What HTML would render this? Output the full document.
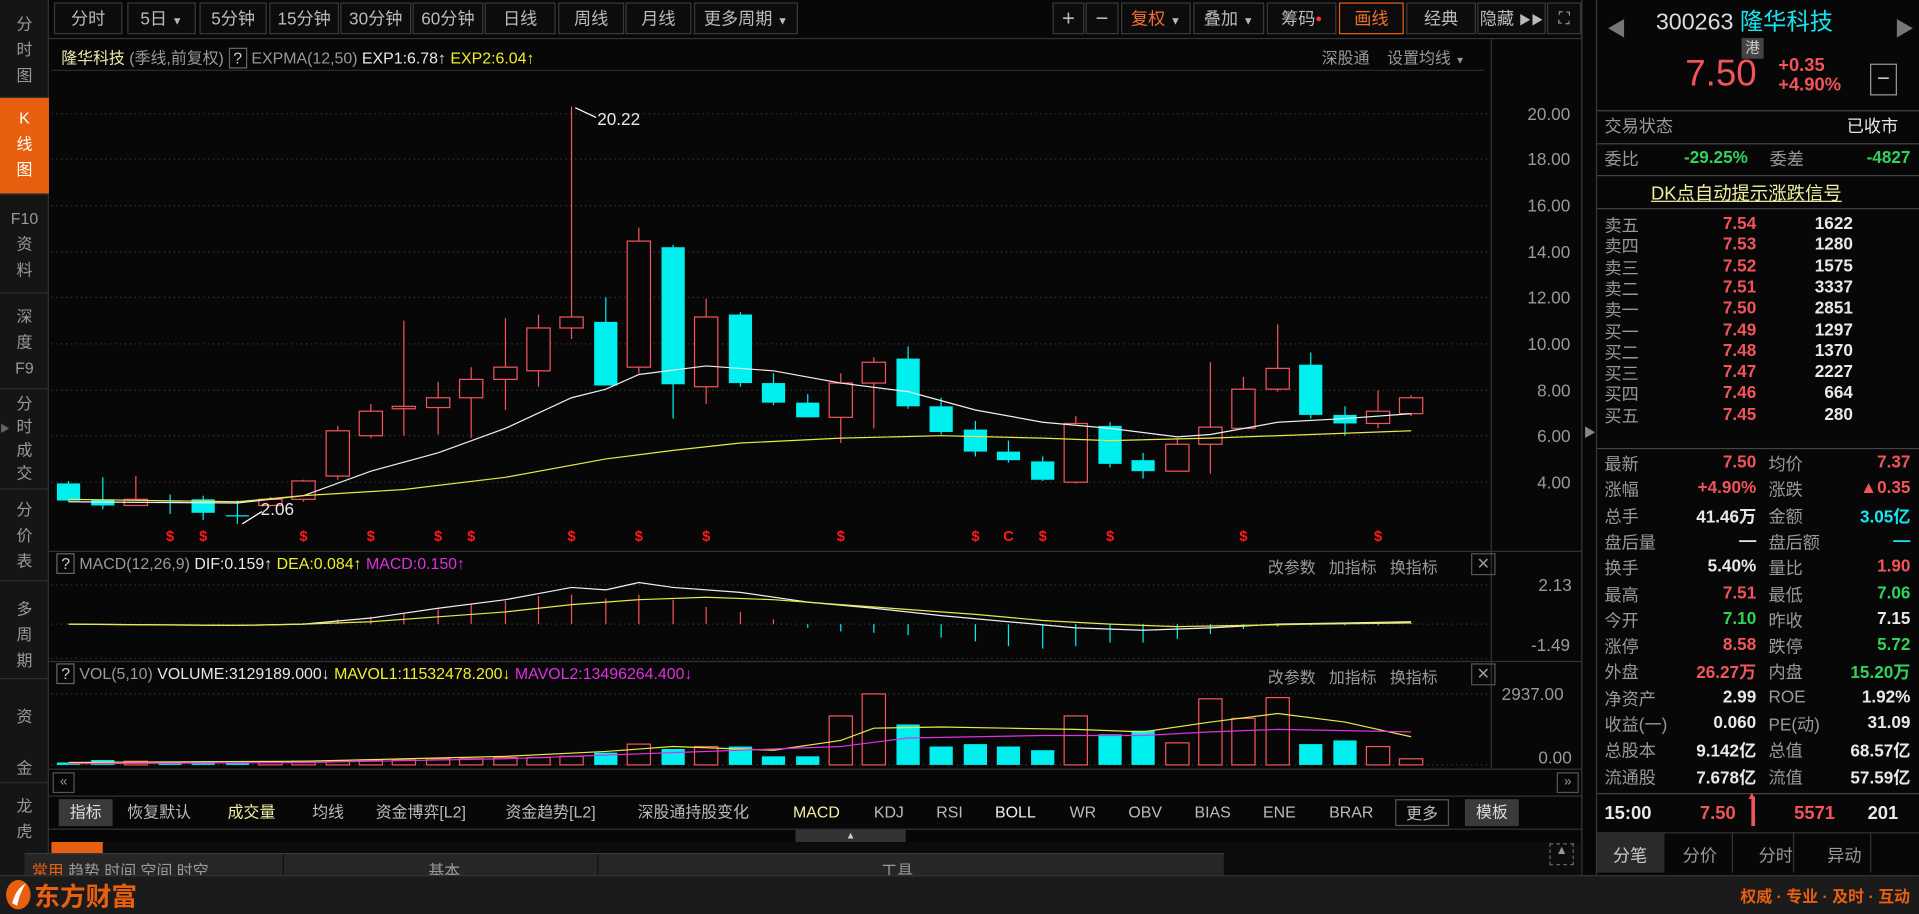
<!DOCTYPE html>
<html><head><meta charset="utf-8">
<style>
*{margin:0;padding:0;box-sizing:border-box}
html,body{width:1919px;height:914px;overflow:hidden;background:#070707}
#w{position:absolute;left:0;top:0;width:1568px;height:747px;transform:scale(1.22385);transform-origin:0 0;background:#070707;font-family:"Liberation Sans","Noto Sans CJK SC",sans-serif;font-size:13px;color:#bbb}
.a{position:absolute;white-space:nowrap}
.side{position:absolute;left:0;top:0;width:40px;height:715px;background:#151515;border-right:1px solid #333}
.si{position:absolute;left:0;width:40px;text-align:center;color:#999;font-size:13px;line-height:21px;border-bottom:1px solid #2c2c2c;overflow:hidden}
.tb{position:absolute;top:2px;height:26px;border:1px solid #3a3a3a;color:#bbb;text-align:center;line-height:24px;font-size:14px;background:#0c0c0c}
.r{color:#f2545b}.g{color:#2fd35a}.c{color:#15e6f0}.y{color:#f0f02a}.m{color:#e030e0}.w{color:#e8e8e8}.gr{color:#999}
.hl{position:absolute;height:1px;background:#333}
.vl{position:absolute;width:1px;background:#333}
.rp{font-size:14px}
.lab{position:absolute;left:1311px;color:#999;font-size:14px}
.v1{position:absolute;right:133px;font-size:14px;font-weight:bold;text-align:right}
.l2{position:absolute;left:1445px;color:#999;font-size:14px}
.v2{position:absolute;right:7px;font-size:14px;font-weight:bold;text-align:right}
.it{position:absolute;top:653px;height:22px;line-height:22px;font-size:13px;color:#bbb}
</style></head><body><div id="w">

<!-- sidebar -->
<div class="side">
<div class="si" style="top:4px;height:76px;padding-top:5px">分<br>时<br>图</div>
<div class="si" style="top:80px;height:79px;padding-top:6px;background:#e8600f;color:#fff">K<br>线<br>图</div>
<div class="si" style="top:160px;height:80px;padding-top:8px">F10<br>资<br>料</div>
<div class="si" style="top:240px;height:78px;padding-top:8px">深<br>度<br>F9</div>
<div class="si" style="top:318px;height:82px;padding-top:2px;line-height:19px">分<br>时<br>成<br>交</div>
<div class="si" style="top:400px;height:75px;padding-top:6px">分<br>价<br>表</div>
<div class="si" style="top:475px;height:80px;padding-top:12px">多<br>周<br>期</div>
<div class="si" style="top:555px;height:85px;padding-top:20px">资<br><br>金</div>
<div class="si" style="top:640px;height:75px;padding-top:8px;border:0">龙<br>虎</div>
</div>
<div class="a" style="left:0px;top:345px;color:#666;font-size:8px">▶</div>

<!-- toolbar -->
<div class="tb" style="left:44px;width:56px">分时</div>
<div class="tb" style="left:104px;width:56px">5日 <span style="font-size:9px">▼</span></div>
<div class="tb" style="left:163px;width:55px">5分钟</div>
<div class="tb" style="left:220px;width:57px">15分钟</div>
<div class="tb" style="left:278px;width:58px">30分钟</div>
<div class="tb" style="left:337px;width:58px">60分钟</div>
<div class="tb" style="left:396px;width:58px">日线</div>
<div class="tb" style="left:456px;width:54px">周线</div>
<div class="tb" style="left:511px;width:54px">月线</div>
<div class="tb" style="left:567px;width:85px">更多周期 <span style="font-size:9px">▼</span></div>
<div class="tb" style="left:860px;width:26px;font-size:18px">+</div>
<div class="tb" style="left:887px;width:27px;font-size:18px">−</div>
<div class="tb" style="left:916px;width:57px;color:#f07030">复权 <span style="font-size:9px;color:#bbb">▼</span></div>
<div class="tb" style="left:975px;width:58px">叠加 <span style="font-size:9px">▼</span></div>
<div class="tb" style="left:1035px;width:57px">筹码<span style="color:#f33;font-size:9px;vertical-align:top">●</span></div>
<div class="tb" style="left:1094px;width:53px;color:#f07030;border-color:#e8600f">画线</div>
<div class="tb" style="left:1149px;width:57px">经典</div>
<div class="tb" style="left:1207px;width:56px">隐藏 <span style="font-size:10px">▶▶</span></div>
<div class="tb" style="left:1264px;width:28px;font-size:13px">⛶</div>

<!-- frames -->
<div class="hl" style="left:40px;top:31px;width:1253px"></div>
<div class="vl" style="left:1218px;top:31px;height:597px"></div>
<div class="vl" style="left:1292px;top:0;height:715px;background:#3a3a3a"></div>
<div class="vl" style="left:1304px;top:0;height:715px;background:#3a3a3a"></div>
<div class="a" style="left:1294px;top:345px;color:#888;font-size:10px">▶</div>
<div class="hl" style="left:40px;top:450px;width:1253px"></div>
<div class="hl" style="left:40px;top:540px;width:1253px"></div>
<div class="hl" style="left:40px;top:628px;width:1253px"></div>
<div class="hl" style="left:40px;top:650px;width:1253px"></div>
<div class="hl" style="left:40px;top:677px;width:1253px"></div>

<!-- main header -->
<div class="a" style="left:50px;top:37px;font-size:13px"><span style="color:#eaeab0">隆华科技</span> <span class="gr">(季线,前复权)</span> <span style="border:1px solid #666;padding:0 3px;color:#ccc">?</span> <span class="gr">EXPMA(12,50)</span> <span class="w">EXP1:6.78↑</span> <span class="y">EXP2:6.04↑</span></div>
<div class="a gr" style="left:1080px;top:37px">深股通 &nbsp;&nbsp; 设置均线 <span style="font-size:8px">▼</span></div>
<div class="hl" style="left:42px;top:57px;width:1170px;background:#2a2a2a"></div>

<!-- price axis -->
<div class="a gr" style="left:1248px;top:85px;font-size:14px;line-height:16px">20.00</div>
<div class="a gr" style="left:1248px;top:122px;font-size:14px">18.00</div>
<div class="a gr" style="left:1248px;top:160px;font-size:14px">16.00</div>
<div class="a gr" style="left:1248px;top:198px;font-size:14px">14.00</div>
<div class="a gr" style="left:1248px;top:235px;font-size:14px">12.00</div>
<div class="a gr" style="left:1248px;top:273px;font-size:14px">10.00</div>
<div class="a gr" style="left:1256px;top:311px;font-size:14px">8.00</div>
<div class="a gr" style="left:1256px;top:348px;font-size:14px">6.00</div>
<div class="a gr" style="left:1256px;top:386px;font-size:14px">4.00</div>

<svg class="a" style="left:0;top:0" width="1292" height="650" id="sv"></svg>

<div class="a w" style="left:488px;top:89px;font-size:14px">20.22</div>
<div class="a w" style="left:213px;top:408px;font-size:14px">2.06</div>

<!-- MACD header -->
<div class="a" style="left:46px;top:453px;font-size:13px"><span style="border:1px solid #666;padding:0 3px;color:#ccc">?</span> <span class="gr">MACD(12,26,9)</span> <span class="w">DIF:0.159↑</span> <span class="y">DEA:0.084↑</span> <span class="m">MACD:0.150↑</span></div>
<div class="a gr" style="left:1036px;top:453px;font-size:13px">改参数 &nbsp; 加指标 &nbsp; 换指标</div>
<div class="a gr" style="left:1202px;top:452px;width:20px;height:18px;border:1px solid #555;text-align:center;line-height:16px">✕</div>
<div class="a gr" style="left:1257px;top:470px;font-size:14px">2.13</div>
<div class="a gr" style="left:1251px;top:519px;font-size:14px">-1.49</div>

<!-- VOL header -->
<div class="a" style="left:46px;top:543px;font-size:13px"><span style="border:1px solid #666;padding:0 3px;color:#ccc">?</span> <span class="gr">VOL(5,10)</span> <span class="w">VOLUME:3129189.000↓</span> <span class="y">MAVOL1:11532478.200↓</span> <span class="m">MAVOL2:13496264.400↓</span></div>
<div class="a gr" style="left:1036px;top:543px;font-size:13px">改参数 &nbsp; 加指标 &nbsp; 换指标</div>
<div class="a gr" style="left:1202px;top:542px;width:20px;height:18px;border:1px solid #555;text-align:center;line-height:16px">✕</div>
<div class="a gr" style="left:1227px;top:559px;font-size:14px">2937.00</div>
<div class="a gr" style="left:1257px;top:611px;font-size:14px">0.00</div>

<!-- scrollbar -->
<div class="a gr" style="left:43px;top:631px;width:18px;height:17px;border:1px solid #555;text-align:center;font-size:11px;line-height:15px">«</div>
<div class="a gr" style="left:1272px;top:631px;width:18px;height:17px;border:1px solid #555;text-align:center;font-size:11px;line-height:15px">»</div>

<!-- indicator tabs -->
<div class="it" style="left:48px;width:44px;background:#3a3a3a;text-align:center;color:#ddd">指标</div>
<div class="it" style="left:104px">恢复默认</div>
<div class="it y" style="left:186px;color:#f0f0a0">成交量</div>
<div class="it" style="left:255px">均线</div>
<div class="it" style="left:307px">资金博弈[L2]</div>
<div class="it" style="left:413px">资金趋势[L2]</div>
<div class="it" style="left:521px">深股通持股变化</div>
<div class="it" style="left:648px;color:#f0f0a0">MACD</div>
<div class="it" style="left:714px">KDJ</div>
<div class="it" style="left:765px">RSI</div>
<div class="it" style="left:813px;color:#eee">BOLL</div>
<div class="it" style="left:874px">WR</div>
<div class="it" style="left:922px">OBV</div>
<div class="it" style="left:976px">BIAS</div>
<div class="it" style="left:1032px">ENE</div>
<div class="it" style="left:1086px">BRAR</div>
<div class="it" style="left:1140px;width:44px;border:1px solid #555;text-align:center">更多</div>
<div class="it" style="left:1197px;width:44px;background:#3a3a3a;text-align:center;color:#ddd">模板</div>

<!-- bottom tabs (partially covered) -->
<div class="a" style="left:650px;top:678px;width:90px;height:10px;background:#333;text-align:center;color:#ccc;font-size:8px;line-height:10px">▲</div>
<div class="a" style="left:40px;top:688px;width:1252px;height:27px;background:#0c0c0c;overflow:hidden">
<div class="a" style="left:2px;top:0;width:42px;height:27px;background:#e8600f"></div>
</div>
<div class="a" style="left:20px;top:697px;width:980px;height:18px;background:#262626;overflow:hidden;border-top:1px solid #3a3a3a">
<div class="a" style="left:6px;top:3px;color:#e8600f;font-size:13px">常用 <span class="gr">趋势 时间 空间 时空</span></div>
<div class="vl" style="left:211px;top:0;height:18px;background:#111"></div>
<div class="a gr" style="left:330px;top:3px">基本</div>
<div class="vl" style="left:468px;top:0;height:18px;background:#111"></div>
<div class="a gr" style="left:700px;top:3px">工具</div>
</div>
<div class="a gr" style="left:1266px;top:689px;width:20px;height:18px;border:1px dashed #666;font-size:10px;text-align:center">▲</div>

<!-- right panel -->
<div class="a" style="left:1313px;top:10px;color:#777;font-size:16px">◀</div>
<div class="a" style="left:1548px;top:10px;color:#777;font-size:16px">▶</div>
<div class="a" style="left:1353px;top:3px;font-size:19px;color:#ddd">300263 <span class="c">隆华科技</span></div>
<div class="a" style="left:1423px;top:31px;width:18px;height:17px;background:#444;color:#ccc;font-size:12px;text-align:center;line-height:17px">港</div>
<div class="a r" style="left:1377px;top:44px;font-size:30px">7.50</div>
<div class="a r" style="left:1453px;top:46px;font-size:15px;font-weight:bold;line-height:16px">+0.35<br>+4.90%</div>
<div class="a" style="left:1528px;top:52px;width:22px;height:26px;border:1px solid #999;color:#ccc;text-align:center;font-size:18px;line-height:22px">−</div>
<div class="hl" style="left:1305px;top:90px;width:263px;background:#444"></div>
<div class="a gr rp" style="left:1311px;top:93px">交易状态</div>
<div class="a w rp" style="left:1509px;top:93px">已收市</div>
<div class="hl" style="left:1305px;top:117px;width:263px;background:#444"></div>
<div class="a gr rp" style="left:1311px;top:120px">委比</div>
<div class="a g rp" style="left:1376px;top:120px;font-weight:bold">-29.25%</div>
<div class="a gr rp" style="left:1446px;top:120px">委差</div>
<div class="a g rp" style="right:7px;top:120px;font-weight:bold">-4827</div>
<div class="hl" style="left:1305px;top:143px;width:263px;background:#444"></div>
<div class="a" style="left:1349px;top:147px;font-size:15px;color:#f0f0a0;text-decoration:underline">DK点自动提示涨跌信号</div>
<div class="hl" style="left:1305px;top:170px;width:263px;background:#444"></div>

<div id="ob"></div>
<div class="hl" style="left:1305px;top:366px;width:263px;background:#444"></div>
<div id="st"></div>
<div class="hl" style="left:1305px;top:648px;width:263px;background:#444"></div>
<div class="a w" style="left:1311px;top:656px;font-size:15px;font-weight:bold">15:00</div>
<div class="a r" style="left:1389px;top:656px;font-size:15px;font-weight:bold">7.50</div>
<div class="a" style="left:1431px;top:651px;width:3px;height:24px;background:#f2545b"></div>
<div class="a r" style="left:1427px;top:645px;font-size:9px">▲</div>
<div class="a r" style="left:1466px;top:656px;font-size:15px;font-weight:bold">5571</div>
<div class="a w" style="left:1526px;top:656px;font-size:15px;font-weight:bold">201</div>
<div class="hl" style="left:1305px;top:680px;width:263px;background:#333"></div>
<div class="a" style="left:1305px;top:681px;width:55px;height:32px;background:#2a2a2a"></div>
<div class="a" style="left:1318px;top:689px;color:#ccc;font-size:14px">分笔</div>
<div class="a gr" style="left:1375px;top:689px;font-size:14px">分价</div>
<div class="a gr" style="left:1437px;top:689px;font-size:14px">分时</div>
<div class="a gr" style="left:1493px;top:689px;font-size:14px">异动</div>
<div class="vl" style="left:1415px;top:681px;height:32px"></div>
<div class="vl" style="left:1465px;top:681px;height:32px"></div>
<div class="vl" style="left:1528px;top:681px;height:32px"></div>

<!-- footer -->
<div class="a" style="left:0;top:715px;width:1568px;height:32px;background:#1b1b1b;border-top:1px solid #333"></div>
<svg class="a" style="left:4px;top:718px" width="22" height="26"><ellipse cx="11" cy="13" rx="10" ry="12" fill="#e8600f"/><path d="M6 20 Q9 8 17 4 Q12 12 10 22Z" fill="#fff"/></svg>
<div class="a" style="left:28px;top:717px;font-size:21px;font-weight:bold;color:#e8600f">东方财富</div>
<div class="a" style="left:1422px;top:722px;font-size:13px;font-weight:bold;color:#e8600f">权威 · 专业 · 及时 · 互动</div>

</div>
<script>
var NS="http://www.w3.org/2000/svg",sv=document.getElementById('sv');
function el(t,a){var e=document.createElementNS(NS,t);for(var k in a)e.setAttribute(k,a[k]);sv.appendChild(e);return e}
[93,130,168,206,243,281,319,356,394].forEach(function(y){el('line',{x1:42,x2:1218,y1:y,y2:y,stroke:'#3a3a3a','stroke-dasharray':'1 3'})});
[478,510,538].forEach(function(y){el('line',{x1:42,x2:1218,y1:y,y2:y,stroke:'#3a3a3a','stroke-dasharray':'1 3'})});
[567,625].forEach(function(y){el('line',{x1:42,x2:1218,y1:y,y2:y,stroke:'#3a3a3a','stroke-dasharray':'1 3'})});
var C=[[56,0,395,409,393,410],[84,0,408,413,390,416],[111,1,408,413,389,413],[139,0,410,411,404,420],[166,0,408,419,405,425],[194,0,421,422,409,428],[221,1,408,413,406,414],[248,1,393,408,392,410],[276,1,352,389,348,392],[303,1,336,356,330,358],[330,1,332,334,262,356],[358,1,325,333,312,355],[385,1,310,325,300,358],[413,1,300,310,260,335],[440,1,268,303,257,316],[467,1,259,268,87,277],[495,0,263,315,243,315],[522,1,197,300,186,305],[550,0,202,314,200,342],[577,1,259,316,244,330],[605,0,257,313,255,316],[632,0,313,329,305,331],[660,0,329,341,322,341],[687,1,313,341,305,362],[714,1,296,313,292,350],[742,0,293,332,283,334],[769,0,332,353,325,355],[797,0,351,369,344,373],[824,0,369,376,360,378],[852,0,377,392,373,393],[879,1,346,394,340,395],[907,0,348,379,345,382],[934,0,376,385,370,391],[962,1,363,385,358,385],[989,1,349,363,296,387],[1016,1,318,350,308,350],[1044,1,301,318,265,320],[1071,0,298,339,288,342],[1099,0,339,346,332,356],[1126,1,336,346,319,350],[1153,1,325,338,323,340]];
var V=[2,4,3,2,3,2,2,3,3,4,4,5,5,6,6,7,10,17,13,15,15,7,7,40,58,33,15,17,15,12,40,25,28,18,54,38,55,17,20,15,5];
C.forEach(function(c,i){var col=c[1]?'#f2545b':'#00f0f0';
 el('line',{x1:c[0],x2:c[0],y1:c[4],y2:c[5],stroke:col});
 var h=Math.max(1,c[3]-c[2]);
 if(c[1]){el('rect',{x:c[0]-9.5,y:c[2],width:19,height:h,fill:'#070707',stroke:col})}else{el('rect',{x:c[0]-9.5,y:c[2],width:19,height:h,fill:col})}
 var v=V[i];
 if(c[1])el('rect',{x:c[0]-9.5,y:625-v,width:19,height:v,fill:'none',stroke:col});else el('rect',{x:c[0]-9.5,y:625-v,width:19,height:v,fill:col});
});
function pl(p,col){el('polyline',{points:p,fill:'none',stroke:col,'stroke-width':1})}
pl("56,410 194,411 248,405 303,385 358,370 413,350 467,325 495,318 522,306 577,299 632,303 687,313 742,320 797,335 852,345 907,350 962,357 989,355 1044,345 1099,342 1153,338",'#eee');
pl("56,408 194,410 248,405 330,400 413,390 495,375 550,368 605,362 687,358 769,356 852,358 907,360 989,358 1071,355 1153,352",'#e8e84a');
el('line',{x1:470,y1:88,x2:487,y2:96,stroke:'#fff'});
el('line',{x1:198,y1:428,x2:214,y2:418,stroke:'#fff'});
[139,166,248,303,358,385,467,522,577,687,797,824,852,907,1016,1126].forEach(function(x,i){var t=el('text',{x:x,y:442,fill:'#ff1a1a','font-size':12,'font-weight':'bold','text-anchor':'middle','font-family':'Liberation Sans'});t.textContent=(x==824?'C':'$')});
var mz=510;
var md=[[248,1],[276,4],[303,6],[330,9],[358,12],[385,16],[413,19],[440,23],[467,24],[495,21],[522,24],[550,20],[577,14],[605,10],[632,4],[660,-3],[687,-6],[714,-7],[742,-9],[769,-11],[797,-14],[824,-18],[852,-20],[879,-18],[907,-15],[934,-15],[962,-12],[989,-8],[1016,-4],[1044,-2],[1071,-1],[1099,-1],[1126,-1],[1153,1]];
md.forEach(function(m){el('line',{x1:m[0],x2:m[0],y1:mz,y2:mz-m[1],stroke:m[1]>0?'#f2545b':'#00f0f0'})});
pl("56,510 194,511 248,510 303,505 358,497 413,490 467,480 495,482 522,476 550,480 605,484 660,492 714,497 769,503 824,508 879,513 934,515 989,513 1044,510 1099,509 1153,508",'#eee');
pl("56,510 194,511 248,510 303,508 358,504 413,500 467,494 522,490 577,488 632,490 687,494 742,498 797,502 852,507 907,510 962,512 1016,511 1071,510 1153,509",'#e8e84a');
pl("56,623 248,622 413,618 495,614 550,610 632,613 687,605 714,595 769,594 824,595 879,596 934,598 989,590 1044,583 1099,590 1153,602",'#e8e84a');
pl("56,624 248,623 413,620 550,615 687,610 742,603 852,601 934,601 989,598 1044,596 1099,597 1153,598",'#e030e0');
var ob=[['卖五','7.54','1622'],['卖四','7.53','1280'],['卖三','7.52','1575'],['卖二','7.51','3337'],['卖一','7.50','2851'],['买一','7.49','1297'],['买二','7.48','1370'],['买三','7.47','2227'],['买四','7.46','664'],['买五','7.45','280']];
var h='';ob.forEach(function(o,i){var y=174+i*17.3;h+='<div class="lab" style="top:'+y+'px">'+o[0]+'</div><div class="a r" style="right:133px;top:'+y+'px;font-size:14px;font-weight:bold">'+o[1]+'</div><div class="a w" style="right:54px;top:'+y+'px;font-size:14px;font-weight:bold">'+o[2]+'</div>'});
document.getElementById('ob').innerHTML=h;
var st=[['最新','7.50','r','均价','7.37','r'],['涨幅','+4.90%','r','涨跌','▲0.35','r'],['总手','41.46万','w','金额','3.05亿','c'],['盘后量','—','w','盘后额','—','c'],['换手','5.40%','w','量比','1.90','r'],['最高','7.51','r','最低','7.06','g'],['今开','7.10','g','昨收','7.15','w'],['涨停','8.58','r','跌停','5.72','g'],['外盘','26.27万','r','内盘','15.20万','g'],['净资产','2.99','w','ROE','1.92%','w'],['收益(一)','0.060','w','PE(动)','31.09','w'],['总股本','9.142亿','w','总值','68.57亿','w'],['流通股','7.678亿','w','流值','57.59亿','w']];
h='';st.forEach(function(s,i){var y=369+i*21.3;h+='<div class="lab" style="top:'+y+'px">'+s[0]+'</div><div class="v1 '+s[2]+'" style="top:'+y+'px">'+s[1]+'</div><div class="l2" style="top:'+y+'px">'+s[3]+'</div><div class="v2 '+s[5]+'" style="top:'+y+'px">'+s[4]+'</div>'});
document.getElementById('st').innerHTML=h;
</script>
</body></html>
